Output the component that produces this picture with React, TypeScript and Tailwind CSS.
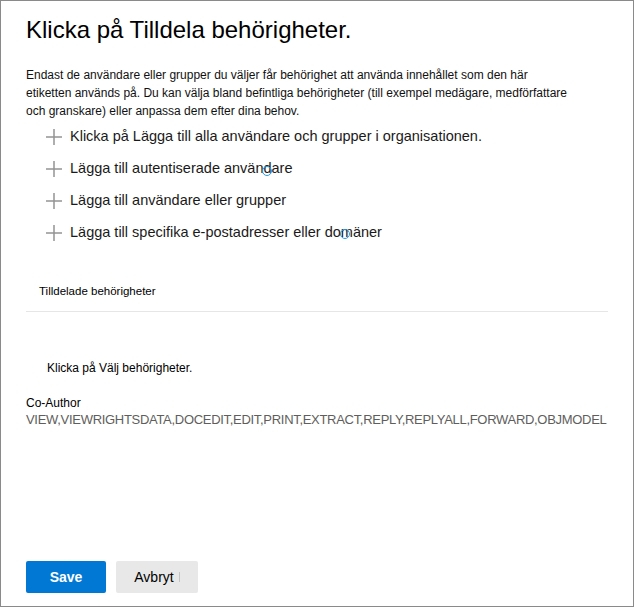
export default function App() {
  const actions = [
    'Klicka på Lägga till alla användare och grupper i organisationen.',
    'Lägga till autentiserade användare',
    'Lägga till användare eller grupper',
    'Lägga till specifika e-postadresser eller domäner',
  ]

  return (
    <div className="w-[634px] h-[607px] border border-[#8a8a8a] bg-white text-black font-['Liberation_Sans',Arial,sans-serif] relative flex flex-col">
      <div className="px-[25px] pt-[14px] flex-1">
        <h1 className="text-[24px] leading-[30px] font-normal">Klicka på Tilldela behörigheter.</h1>

        <p className="mt-[21px] w-[546px] text-[12px] leading-[18px] text-[#111]">
          Endast de användare eller grupper du väljer får behörighet att använda innehållet som den här etiketten används på. Du kan välja bland befintliga behörigheter (till exempel medägare, medförfattare och granskare) eller anpassa dem efter dina behov.
        </p>

        <ul className="mt-[1px] pl-[20px]">
          {actions.map((a) => (
            <li key={a} className="flex items-center h-[32px] gap-[8px]">
              <svg width="16" height="16" viewBox="0 0 16 16" className="shrink-0">
                <path d="M8 0v16M0 8h16" stroke="#949494" strokeWidth="1.5" />
              </svg>
              <span className="text-[14.5px] text-[#1b1a19]">{a}</span>
            </li>
          ))}
        </ul>

        <div className="mt-[32px] pl-[13px] text-[11.5px] leading-[20px]">Tilldelade behörigheter</div>
        <div className="mt-[10px] border-t border-[#e6e6e6]" />

        <div className="mt-[46px] pl-[21px] text-[12px] leading-[20px]">Klicka på Välj behörigheter.</div>

        <div className="mt-[17px] text-[12px] leading-[16px]">Co-Author</div>
        <div className="text-[13px] leading-[18px] tracking-[-0.3px] text-[#605e5c] whitespace-nowrap">
          VIEW,VIEWRIGHTSDATA,DOCEDIT,EDIT,PRINT,EXTRACT,REPLY,REPLYALL,FORWARD,OBJMODEL
        </div>
      </div>

      <div className="px-[25px] pb-[13px] flex gap-[10px]">
        <button className="w-[80px] h-[32px] bg-[#0078d4] text-white text-[14px] font-bold rounded-[2px]">Save</button>
        <button className="w-[82px] h-[32px] bg-[#e8e8e8] text-[14px] rounded-[2px] flex items-center justify-center gap-[5px]">
          Avbryt
          <span className="w-px h-[10px] bg-[#c4c4c4]" />
        </button>
      </div>

      <span className="absolute left-[261px] top-[165px] w-[10px] h-[10px] rounded-full border-[1.5px] border-[#2a9ae0]" />
      <span className="absolute left-[339px] top-[228px] w-[10px] h-[10px] rounded-full border-[1.5px] border-[#2a9ae0]" />
    </div>
  )
}
